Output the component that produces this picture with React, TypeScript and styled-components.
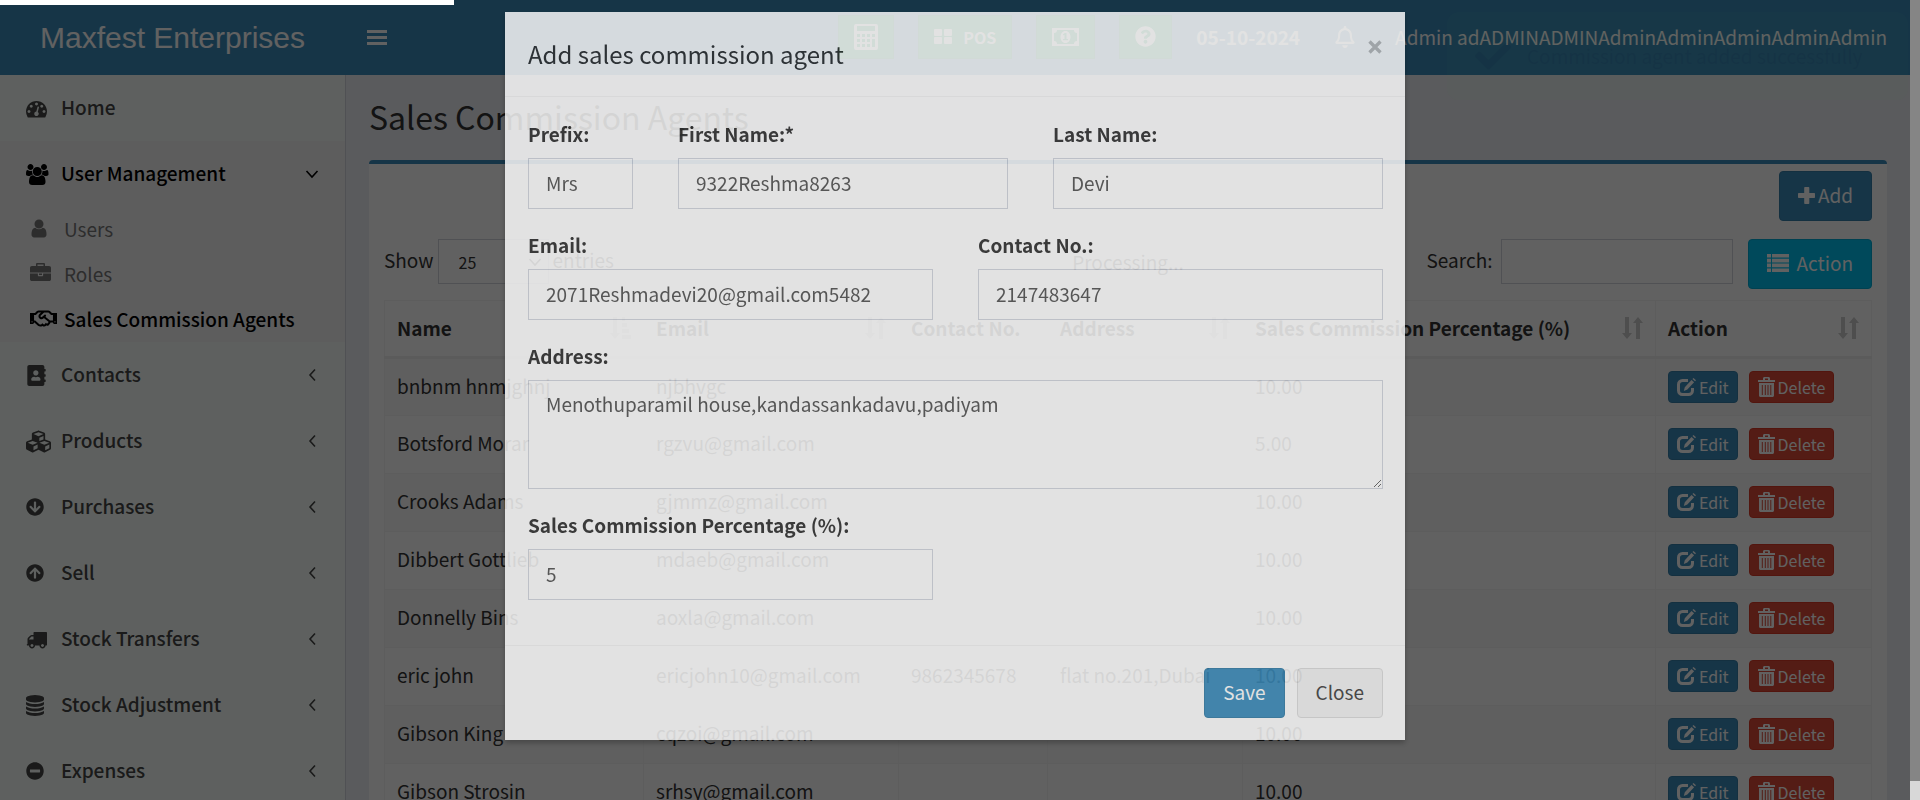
import React from "react";
import styled, { createGlobalStyle, css } from "styled-components";
import {
  FaAddressBook,
  FaArrowCircleDown,
  FaArrowCircleUp,
  FaCheck,
  FaCubes,
  FaMinusCircle,
  FaQuestionCircle,
  FaRegBell,
  FaRegHandshake,
} from "react-icons/fa";

const sans = `"Noto Sans CJK JP", "Open Sans", sans-serif`;

const GlobalStyle = createGlobalStyle`
  *, *::before, *::after { box-sizing: border-box; }
  body { margin: 0; font-family: ${sans}; font-size: 19px; line-height: 30px; color: #333; }
  button, input, select, textarea { font: inherit; color: inherit; margin: 0; }
  h1, h2, ul { margin: 0; padding: 0; font-weight: 400; }
  ul { list-style: none; }
  a { color: inherit; text-decoration: none; }
  svg { display: block; flex: none; }
`;

/* ---------- icons ---------- */

type GlyphProps = { d: string; w?: number; size?: number };
const Glyph = ({ d, w = 1792, size = 21 }: GlyphProps) => (
  <svg viewBox={`0 0 ${w} 1792`} width={(size * w) / 1792} height={size} fill="currentColor" aria-hidden="true">
    <path d={d} />
  </svg>
);

const DASHBOARD =
  "M384 1152q0-53-37.5-90.5t-90.5-37.500-90.500 37.500-37.500 90.500 37.500 90.500 90.500 37.500 90.500-37.500 37.500-90.500zm192-448q0-53-37.500-90.500t-90.500-37.500-90.500 37.500-37.500 90.500 37.500 90.500 90.500 37.500 90.500-37.500 37.500-90.500zm428 481l101-382q6-26-7.500-48.500t-38.500-29.500-48 6.500-30 39.500l-101 382q-60 5-107 43.500t-63 98.500q-20 77 20 146t117 89 146-20 89-117q16-60-6-117t-72-91zm660-33q0-53-37.500-90.500t-90.500-37.500-90.500 37.500-37.500 90.500 37.500 90.500 90.500 37.500 90.500-37.500 37.500-90.500zm-640-640q0-53-37.500-90.500t-90.500-37.500-90.500 37.500-37.500 90.500 37.500 90.500 90.500 37.500 90.500-37.500 37.500-90.500zm448 192q0-53-37.500-90.500t-90.500-37.500-90.500 37.500-37.500 90.500 37.500 90.500 90.500 37.500 90.500-37.500 37.500-90.500zm320 448q0 261-141 483-19 29-54 29h-1402q-35 0-54-29-141-221-141-483 0-182 71-348t191-286 286-191 348-71 348 71 286 191 191 286 71 348z";
const USERS =
  "M593 896q-162 5-265 128h-134q-82 0-138-40.500t-56-118.500q0-353 124-353 6 0 43.500 21t97.500 42.500 119 21.500q67 0 133-23-5 37-5 66 0 139 81 256zm1071 637q0 120-73 189.500t-194 69.500h-874q-121 0-194-69.500t-73-189.500q0-53 3.500-103.500t14-109 26.500-108.500 43-97.500 62-81 85.500-53.500 111.500-20q10 0 43 21.500t73 48 107 48 135 21.500 135-21.500 107-48 73-48 43-21.500q61 0 111.500 20t85.500 53.500 62 81 43 97.500 26.500 108.500 14 109 3.500 103.500zm-1024-1277q0 106-75 181t-181 75-181-75-75-181 75-181 181-75 181 75 75 181zm704 384q0 159-112.500 271.500t-271.500 112.500-271.500-112.500-112.500-271.500 112.500-271.500 271.500-112.500 271.500 112.500 112.500 271.500zm576 225q0 78-56 118.500t-138 40.500h-134q-103-123-265-128 81-117 81-256 0-29-5-66 66 23 133 23 59 0 119-21.500t97.500-42.500 43.500-21q124 0 124 353zm-128-609q0 106-75 181t-181 75-181-75-75-181 75-181 181-75 181 75 75 181z";
const USER =
  "M1408 1399q0 109-62.500 187t-150.500 78h-854q-88 0-150.500-78t-62.500-187q0-85 8.500-160.500t31.500-152 58.500-131 94-89 134.500-34.500q131 128 313 128t313-128q76 0 134.500 34.500t94 89 58.500 131 31.500 152 8.500 160.500zm-256-887q0 159-112.500 271.500t-271.500 112.500-271.500-112.500-112.500-271.500 112.500-271.500 271.500-112.500 271.500 112.500 112.500 271.500z";
const BRIEFCASE =
  "M640 256h512v-128h-512v128zm1152 640v480q0 66-47 113t-113 47h-1472q-66 0-113-47t-47-113v-480h672v160q0 26 19 45t45 19h320q26 0 45-19t19-45v-160h672zm-768 0v128h-256v-128h256zm768-480v384h-1792v-384q0-66 47-113t113-47h352v-160q0-40 28-68t68-28h576q40 0 68 28t28 68v160h352q66 0 113 47t47 113z";
const TRUCK =
  "M640 1408q0-52-38-90t-90-38-90 38-38 90 38 90 90 38 90-38 38-90zm-384-512h384v-256h-158q-13 0-22 9l-195 195q-9 9-9 22v30zm1280 512q0-52-38-90t-90-38-90 38-38 90 38 90 90 38 90-38 38-90zm256-1088v1024q0 15-4 26.500t-13.500 18.500-16.500 11.500-23.500 6-22.500 2-25.500 0-22.500-.5q0 106-75 181t-181 75-181-75-75-181h-384q0 106-75 181t-181 75-181-75-75-181h-64q-3 0-22.500.5t-25.500 0-22.500-2-23.500-6-16.500-11.500-13.500-18.500-4-26.500q0-26 19-45t45-19v-320q0-8-.5-35t0-38 2.500-34.500 6.500-37 14-30.500 22.500-30l198-198q19-19 50.500-32t58.500-13h160v-192q0-26 19-45t45-19h1024q26 0 45 19t19 45z";
const DATABASE =
  "M768 768q237 0 443-43t325-127v170q0 69-103 128t-280 93.500-385 34.500-385-34.500-280-93.500-103-128v-170q119 84 325 127t443 43zm0 768q237 0 443-43t325-127v170q0 69-103 128t-280 93.500-385 34.500-385-34.500-280-93.500-103-128v-170q119 84 325 127t443 43zm0-384q237 0 443-43t325-127v170q0 69-103 128t-280 93.500-385 34.500-385-34.500-280-93.500-103-128v-170q119 84 325 127t443 43zm0-1152q208 0 385 34.500t280 93.500 103 128v128q0 69-103 128t-280 93.500-385 34.500-385-34.500-280-93.500-103-128v-128q0-69 103-128t280-93.500 385-34.500z";

const Bars = () => (
  <svg viewBox="0 0 20 16" width="20" height="16" fill="currentColor" aria-hidden="true">
    <path d="M0 0h20v3H0zM0 6h20v3H0zM0 12h20v3H0z" />
  </svg>
);

const Angle = ({ open }: { open?: boolean }) => (
  <svg viewBox="0 0 14 14" width="14" height="14" fill="none" stroke="currentColor" strokeWidth="1.600" aria-hidden="true">
    <path d={open ? "M1.500 4L7 10l5.500-6" : "M10 1.500L5 7l5 5.500"} />
  </svg>
);

const CrossIcon = () => (
  <svg viewBox="0 0 14 14" width="14" height="14" stroke="currentColor" strokeWidth="3.400" aria-hidden="true">
    <path d="M1.500 1.500l11 11M12.500 1.500l-11 11" />
  </svg>
);

const PlusIcon = () => (
  <svg viewBox="0 0 17 17" width="17" height="17" fill="currentColor" aria-hidden="true">
    <path d="M7 0h3.500q.8 0 .8.8V6h5q.7 0 .7.800v3.400q0 .8-.7.8h-5v5.200q0 .8-.8.8H7q-.8 0-.8-.8V11H.8Q0 11 0 10.200V6.800Q0 6 .8 6h5.400V.8Q6.200 0 7 0z" />
  </svg>
);

const Calculator = () => (
  <svg viewBox="0 0 24 26" width="24" height="26" fill="currentColor" fillRule="evenodd" aria-hidden="true">
    <path d="M2 0h20a2 2 0 0 1 2 2v22a2 2 0 0 1-2 2H2a2 2 0 0 1-2-2V2a2 2 0 0 1 2-2zM3 2v5h18V2zM3 10v3h3v-3zM8 10v3h3v-3zM13 10v3h3v-3zM18 10v3h3v-3zM3 15v3h3v-3zM8 15v3h3v-3zM13 15v3h3v-3zM18 15v8h3v-8zM3 20v3h3v-3zM8 20v3h3v-3zM13 20v3h3v-3z" />
  </svg>
);

const Tiles = () => (
  <svg viewBox="0 0 18 15" width="18" height="15" fill="currentColor" aria-hidden="true">
    <rect width="8" height="7" rx="1" />
    <rect x="10" width="8" height="7" rx="1" />
    <rect y="8" width="8" height="7" rx="1" />
    <rect x="10" y="8" width="8" height="7" rx="1" />
  </svg>
);

const Money = () => (
  <svg viewBox="0 0 27 18" width="27" height="18" fill="currentColor" fillRule="evenodd" aria-hidden="true">
    <path d="M0 0h27v18H0zM5 2a3 3 0 0 1-3 3v8a3 3 0 0 1 3 3h17a3 3 0 0 1 3-3V5a3 3 0 0 1-3-3z" />
    <path d="M13.500 3c3 0 5 2.700 5 6s-2 6-5 6-5-2.700-5-6 2-6 5-6zM12.800 5l-2 1.600.7 1 1-.8V11H11v1.300h5V11h-1.500V5z" />
  </svg>
);

const ListIcon = () => (
  <svg viewBox="0 0 22 18" width="22" height="18" fill="currentColor" aria-hidden="true">
    <path d="M0 0h4v3.600H0zM5 0h17v3.600H5zM0 4.800h4v3.600H0zM5 4.800h17v3.600H5zM0 9.600h4v3.600H0zM5 9.600h17v3.600H5zM0 14.400h4V18H0zM5 14.400h17V18H5z" />
  </svg>
);

const EditIcon = () => (
  <svg viewBox="0 0 19 18" width="19" height="18" aria-hidden="true">
    <path
      d="M11 2.500H5.500a4 4 0 0 0-4 4v6a4 4 0 0 0 4 4h6a4 4 0 0 0 4-4V10"
      fill="none"
      stroke="currentColor"
      strokeWidth="3"
    />
    <path d="M14.500 2l2.600 2.300-6.800 7.200-3.500 1.600 1-3.900zM15.500 1l1-1 2.500 2.200-1 1z" fill="currentColor" />
  </svg>
);

const TrashIcon = () => (
  <svg viewBox="0 0 17 20" width="17" height="20" aria-hidden="true">
    <path d="M0 3h17v2H0zM5 3V1.500C5 .6 5.600 0 6.500 0h4c.9 0 1.500.6 1.500 1.500V3h-2V1.500H7V3zM1 6h15v12.500c0 .8-.7 1.500-1.500 1.500h-12C1.700 20 1 19.300 1 18.500zM3.800 8v10h1V8zM6.800 8v10h1V8zM9.500 8v10h1V8zM12.300 8v10h1V8z" fill="currentColor" fillRule="evenodd" />
  </svg>
);

const SortIcon = ({ active }: { active?: boolean }) => (
  <svg viewBox="0 0 21 22" width="21" height="22" fill="currentColor" aria-hidden="true">
    {active ? (
      <path d="M3 0h4v16h3l-5 6-5-6h3zM12 0h3v4h-3zM12 6h5v4h-5zM12 12h7v4h-7zM12 18h9v4h-9z" />
    ) : (
      <path d="M3 0h4v16h3l-5 6-5-6h3zM14 22h4V6h3l-5-6-5 6h3z" />
    )}
  </svg>
);

/* ---------- frame ---------- */

const Viewport = styled.div`
  display: flex;
  height: 100vh;
  overflow: hidden;
  position: relative;
`;

const Page = styled.div`
  flex: 1;
  min-width: 0;
  display: flex;
  flex-direction: column;
`;

const ScrollRail = styled.div`
  flex: 0 0 10px;
  position: relative;
  z-index: 3;
  display: flex;
  flex-direction: column;
  background: #d8d8d8;
`;

const ScrollThumb = styled.div`
  flex: 1;
  margin-bottom: 19px;
  background: #858585;
`;

const ProgressBar = styled.div`
  position: absolute;
  top: 0;
  left: 0;
  z-index: 5;
  width: 454px;
  height: 5px;
  background: #fff;
`;

const Backdrop = styled.div`
  position: absolute;
  inset: 0;
  z-index: 2;
  background: rgba(0, 0, 0, 0.62);
`;

/* ---------- top bar ---------- */

const TopBar = styled.header`
  flex: 0 0 75px;
  display: flex;
  align-items: center;
  background: #3c8dbc;
  color: #fff;
`;

const Brand = styled.a`
  width: 345px;
  text-align: center;
  font-family: "Liberation Sans", Arial, sans-serif;
  font-size: 30px;
`;

const MenuToggle = styled.button`
  display: flex;
  padding: 22px;
  border: 0;
  background: none;
`;

const TopTools = styled.div`
  margin-left: auto;
  display: flex;
  align-items: center;
  gap: 24px;
  padding: 0 23px 2px 0;
`;

const ToolButton = styled.button`
  display: flex;
  align-items: center;
  justify-content: center;
  gap: 11px;
  height: 44px;
  padding: 0 15px;
  border: 1px solid #008d4c;
  background: #00a65a;
  font-size: 16px;
  font-weight: 700;
`;

const Today = styled.strong`
  font-weight: 700;
`;

const BellButton = styled.button`
  display: flex;
  margin: 0 15px 0 10px;
  padding: 0;
  border: 0;
  background: none;
`;

/* ---------- sidebar ---------- */

const Main = styled.div`
  flex: 1;
  min-height: 0;
  display: flex;
`;

const Sidebar = styled.nav`
  flex: 0 0 346px;
  border-right: 1px solid #d2d6de;
  background: #f6fdf9;
`;

const NavGroup = styled.li<{ $active?: boolean }>`
  background: ${(p) => (p.$active ? "#f4f4f5" : "transparent")};
  color: ${(p) => (p.$active ? "#000" : "#444")};
`;

const NavLink = styled.a`
  display: flex;
  align-items: center;
  height: 66px;
  padding: 0 26px;
  font-weight: 500;
`;

const NavIcon = styled.span`
  width: 35px;
`;

const NavText = styled.span`
  flex: 1;
  padding-bottom: 2px;
`;

const SubLink = styled.a<{ $active?: boolean }>`
  display: flex;
  align-items: center;
  height: 45px;
  padding: 0 0 2px 30px;
  color: ${(p) => (p.$active ? "#000" : "#777")};
  font-weight: ${(p) => (p.$active ? 500 : 400)};
`;

const SubIcon = styled.span`
  width: 34px;
`;

/* ---------- content ---------- */

const Content = styled.main`
  flex: 1;
  min-width: 0;
  padding: 21px 23px 0;
  background: #ecf0f5;
`;

const PageTitle = styled.h1`
  font-size: 32px;
  line-height: 40px;
  margin-bottom: 24px;
`;

const Panel = styled.section`
  border-top: 4px solid #3c8dbc;
  border-radius: 4px;
  padding: 7px 15px 0;
  background: #fff;
`;

const buttonBase = css`
  display: inline-flex;
  align-items: center;
  justify-content: center;
  border-radius: 4px;
  border: 1px solid;
`;

const Button = styled.button<{ $kind: "primary" | "info" | "default" }>`
  ${buttonBase};
  height: 50px;
  padding: 0 18px 2px;
  ${(p) => p.$kind === "primary" && "background:#3c8dbc;border-color:#367fa9;color:#fff;gap:3px;"}
  ${(p) => p.$kind === "info" && "background:#00c0ef;border-color:#00acd6;color:#fff;gap:7px;"}
  ${(p) => p.$kind === "default" && "background:#f4f4f4;border-color:#ddd;color:#444;"}
`;

const PanelHead = styled.div`
  display: flex;
  justify-content: flex-end;
  margin-bottom: 18px;
`;

const TableTools = styled.div`
  position: relative;
  display: flex;
  align-items: flex-start;
  margin-bottom: 11px;
`;

const LengthLabel = styled.label`
  display: flex;
  align-items: center;
  gap: 4px;
`;

const ToolText = styled.span`
  padding-bottom: 4px;
`;

const SelectWrap = styled.span`
  position: relative;
  display: flex;
  align-items: center;
  svg {
    position: absolute;
    right: 7px;
  }
`;

const LengthSelect = styled.select`
  appearance: none;
  width: 111px;
  height: 45px;
  padding: 0 20px;
  border: 1px solid #d2d6de;
  background: #fff;
  font-size: 16px;
`;

const SearchLabel = styled.label`
  display: flex;
  align-items: center;
  gap: 9px;
  margin-left: auto;
  margin-right: 15px;
`;

const SearchInput = styled.input`
  width: 232px;
  height: 45px;
  border: 1px solid #d2d6de;
  background: #fff;
`;

const Processing = styled.div`
  position: absolute;
  left: 50%;
  width: 300px;
  margin-left: -150px;
  height: 61px;
  padding-top: 7px;
  border: 1px solid #f4f4f4;
  background: #fff;
  text-align: center;
`;

const Table = styled.table`
  width: 100%;
  table-layout: fixed;
  border-collapse: collapse;
`;

const Col = styled.col<{ $w?: number }>`
  width: ${(p) => (p.$w ? `${p.$w}px` : "auto")};
`;

const Th = styled.th`
  height: 57px;
  padding: 0 12px 2px;
  border: 1px solid #f4f4f4;
  border-bottom: 3px solid #f0f0f0;
  text-align: left;
  font-weight: 700;
  white-space: nowrap;
`;

const ThInner = styled.div`
  display: flex;
  align-items: center;
  justify-content: space-between;
  svg {
    color: #ccc;
  }
`;

const Tr = styled.tr`
  &:nth-child(odd) {
    background: #f9f9f9;
  }
`;

const Td = styled.td`
  height: 58px;
  padding: 12px 12px 0;
  border: 1px solid #f3f3f3;
  vertical-align: top;
  white-space: nowrap;
`;

const RowActions = styled.div`
  display: flex;
  gap: 11px;
`;

const SmallButton = styled.button<{ $danger?: boolean }>`
  ${buttonBase};
  height: 32px;
  gap: 3px;
  padding: 0 8px;
  font-size: 16px;
  color: #fff;
  background: ${(p) => (p.$danger ? "#dd4b39" : "#3c8dbc")};
  border-color: ${(p) => (p.$danger ? "#d73925" : "#367fa9")};
`;

/* ---------- toast ---------- */

const Toast = styled.div`
  position: absolute;
  top: 12px;
  right: 12px;
  z-index: 4;
  display: flex;
  align-items: center;
  gap: 16px;
  height: 88px;
  width: 461px;
  padding: 0 28px;
  border-radius: 12px;
  background: #51a351;
  color: #000;
  opacity: 0.02;
`;

/* ---------- modal ---------- */

const Modal = styled.form`
  position: absolute;
  top: 12px;
  left: 0;
  right: 10px;
  z-index: 3;
  width: 900px;
  margin: 0 auto;
  background: #fff;
  opacity: 0.82;
  box-shadow: 0 3px 5px rgba(0, 0, 0, 0.3);
`;

const ModalHead = styled.div`
  display: flex;
  justify-content: space-between;
  align-items: flex-start;
  padding: 22px 23px;
  border-bottom: 1px solid #f4f4f4;
`;

const ModalTitle = styled.h2`
  font-size: 24px;
  line-height: 40px;
`;

const CloseX = styled.button`
  display: flex;
  margin-top: 6px;
  padding: 0;
  border: 0;
  background: none;
  color: #000;
  opacity: 0.25;
`;

const ModalBody = styled.div`
  padding: 22px 22px 1px 23px;
`;

const FormRow = styled.div<{ $cols: string }>`
  display: grid;
  grid-template-columns: ${(p) => p.$cols};
  column-gap: 45px;
  margin-bottom: 21px;
`;

const Field = styled.div`
  display: flex;
  flex-direction: column;
  min-width: 0;
`;

const FieldLabel = styled.label`
  margin-bottom: 9px;
  font-weight: 700;
`;

const inputLook = css`
  width: 100%;
  border: 1px solid #d2d6de;
  border-radius: 0;
  background: #fff;
  color: #555;
`;

const TextInput = styled.input`
  ${inputLook};
  height: 51px;
  padding: 0 17px 2px;
`;

const TextArea = styled.textarea`
  ${inputLook};
  display: block;
  height: 109px;
  padding: 8px 17px;
  resize: vertical;
`;

const ModalFoot = styled.div`
  display: flex;
  justify-content: flex-end;
  gap: 12px;
  margin-top: 23px;
  padding: 22px;
  border-top: 1px solid #f4f4f4;
`;

/* ---------- data ---------- */

const nav: { label: string; icon: React.ReactNode }[] = [
  { label: "Contacts", icon: <FaAddressBook size={21} /> },
  { label: "Products", icon: <FaCubes size={25} /> },
  { label: "Purchases", icon: <FaArrowCircleDown size={18} /> },
  { label: "Sell", icon: <FaArrowCircleUp size={18} /> },
  { label: "Stock Transfers", icon: <Glyph d={TRUCK} /> },
  { label: "Stock Adjustment", icon: <Glyph d={DATABASE} w={1536} /> },
  { label: "Expenses", icon: <FaMinusCircle size={18} /> },
];

const rows = [
  ["bnbnm hnmjghnj", "njbhvgc", "", "", "10.00"],
  ["Botsford Morar", "rgzvu@gmail.com", "", "", "5.00"],
  ["Crooks Adams", "gjmmz@gmail.com", "", "", "10.00"],
  ["Dibbert Gottlieb", "mdaeb@gmail.com", "", "", "10.00"],
  ["Donnelly Bins", "aoxla@gmail.com", "", "", "10.00"],
  ["eric john", "ericjohn10@gmail.com", "9862345678", "flat no.201,Dubai", "10.00"],
  ["Gibson King", "cqzoi@gmail.com", "", "", "10.00"],
  ["Gibson Strosin", "srhsy@gmail.com", "", "", "10.00"],
];

const columns: { label: string; width?: number; sort?: "active" | "both" }[] = [
  { label: "Name", width: 259, sort: "active" },
  { label: "Email", width: 255, sort: "both" },
  { label: "Contact No.", width: 149 },
  { label: "Address", width: 195, sort: "both" },
  { label: "Sales Commission Percentage (%)", sort: "both" },
  { label: "Action", width: 216, sort: "both" },
];

const TextField = ({ id, label, value }: { id: string; label: string; value: string }) => (
  <Field>
    <FieldLabel htmlFor={id}>{label}</FieldLabel>
    <TextInput id={id} defaultValue={value} />
  </Field>
);

export default function App() {
  return (
    <>
      <GlobalStyle />
      <Viewport>
        <Page>
          <TopBar>
            <Brand href="#">Maxfest Enterprises</Brand>
            <MenuToggle type="button" aria-label="Toggle navigation">
              <Bars />
            </MenuToggle>
            <TopTools>
              <ToolButton type="button" aria-label="Calculator">
                <Calculator />
              </ToolButton>
              <ToolButton type="button">
                <Tiles />
                POS
              </ToolButton>
              <ToolButton type="button" aria-label="Profit">
                <Money />
              </ToolButton>
              <ToolButton type="button" aria-label="Help">
                <FaQuestionCircle size={21} />
              </ToolButton>
              <Today>05-10-2024</Today>
              <BellButton type="button" aria-label="Notifications">
                <FaRegBell size={22} />
              </BellButton>
              <a href="#">Admin adADMINADMINAdminAdminAdminAdminAdmin</a>
            </TopTools>
          </TopBar>
          <Main>
            <Sidebar>
              <ul>
                <NavGroup>
                  <NavLink href="#">
                    <NavIcon>
                      <Glyph d={DASHBOARD} />
                    </NavIcon>
                    <NavText>Home</NavText>
                  </NavLink>
                </NavGroup>
                <NavGroup $active>
                  <NavLink href="#">
                    <NavIcon>
                      <Glyph d={USERS} w={1920} />
                    </NavIcon>
                    <NavText>User Management</NavText>
                    <Angle open />
                  </NavLink>
                  <SubLink href="#">
                    <SubIcon>
                      <Glyph d={USER} w={1408} />
                    </SubIcon>
                    Users
                  </SubLink>
                  <SubLink href="#">
                    <SubIcon>
                      <Glyph d={BRIEFCASE} />
                    </SubIcon>
                    Roles
                  </SubLink>
                  <SubLink href="#" $active>
                    <SubIcon>
                      <FaRegHandshake size={27} />
                    </SubIcon>
                    Sales Commission Agents
                  </SubLink>
                </NavGroup>
                {nav.map((n) => (
                  <NavGroup key={n.label}>
                    <NavLink href="#">
                      <NavIcon>{n.icon}</NavIcon>
                      <NavText>{n.label}</NavText>
                      <Angle />
                    </NavLink>
                  </NavGroup>
                ))}
              </ul>
            </Sidebar>
            <Content>
              <PageTitle>Sales Commission Agents</PageTitle>
              <Panel>
                <PanelHead>
                  <Button type="button" $kind="primary">
                    <PlusIcon />
                    Add
                  </Button>
                </PanelHead>
                <TableTools>
                  <LengthLabel>
                    <ToolText>Show</ToolText>
                    <SelectWrap>
                      <LengthSelect defaultValue="25">
                        <option>25</option>
                        <option>50</option>
                      </LengthSelect>
                      <Angle open />
                    </SelectWrap>
                    <ToolText>entries</ToolText>
                  </LengthLabel>
                  <Processing>Processing...</Processing>
                  <SearchLabel>
                    <ToolText>Search:</ToolText>
                    <SearchInput type="search" />
                  </SearchLabel>
                  <Button type="button" $kind="info">
                    <ListIcon />
                    Action
                  </Button>
                </TableTools>
                <Table>
                  <colgroup>
                    {columns.map((c) => (
                      <Col key={c.label} $w={c.width} />
                    ))}
                  </colgroup>
                  <thead>
                    <tr>
                      {columns.map((c) => (
                        <Th key={c.label}>
                          <ThInner>
                            {c.label}
                            {c.sort && <SortIcon active={c.sort === "active"} />}
                          </ThInner>
                        </Th>
                      ))}
                    </tr>
                  </thead>
                  <tbody>
                    {rows.map((r) => (
                      <Tr key={r[0]}>
                        {r.map((cell, i) => (
                          <Td key={i}>{cell}</Td>
                        ))}
                        <Td>
                          <RowActions>
                            <SmallButton type="button">
                              <EditIcon />
                              Edit
                            </SmallButton>
                            <SmallButton type="button" $danger>
                              <TrashIcon />
                              Delete
                            </SmallButton>
                          </RowActions>
                        </Td>
                      </Tr>
                    ))}
                  </tbody>
                </Table>
              </Panel>
            </Content>
          </Main>
        </Page>
        <Backdrop />
        <ScrollRail>
          <ScrollThumb />
        </ScrollRail>
        <Modal role="dialog" aria-labelledby="modal-title" onSubmit={(e) => e.preventDefault()}>
          <ModalHead>
            <ModalTitle id="modal-title">Add sales commission agent</ModalTitle>
            <CloseX type="button" aria-label="Dismiss">
              <CrossIcon />
            </CloseX>
          </ModalHead>
          <ModalBody>
            <FormRow $cols="7fr 22fr 22fr">
              <TextField id="prefix" label="Prefix:" value="Mrs" />
              <TextField id="first" label="First Name:*" value="9322Reshma8263" />
              <TextField id="last" label="Last Name:" value="Devi" />
            </FormRow>
            <FormRow $cols="1fr 1fr">
              <TextField id="email" label="Email:" value="2071Reshmadevi20@gmail.com5482" />
              <TextField id="contact" label="Contact No.:" value="2147483647" />
            </FormRow>
            <FormRow $cols="1fr">
              <Field>
                <FieldLabel htmlFor="address">Address:</FieldLabel>
                <TextArea id="address" defaultValue="Menothuparamil house,kandassankadavu,padiyam" />
              </Field>
            </FormRow>
            <FormRow $cols="1fr 1fr">
              <TextField id="percent" label="Sales Commission Percentage (%):" value="5" />
            </FormRow>
          </ModalBody>
          <ModalFoot>
            <Button type="submit" $kind="primary">
              Save
            </Button>
            <Button type="button" $kind="default">
              Close
            </Button>
          </ModalFoot>
        </Modal>
        <Toast role="status">
          <FaCheck size={36} />
          Commission agent added successfully
        </Toast>
        <ProgressBar />
      </Viewport>
    </>
  );
}
